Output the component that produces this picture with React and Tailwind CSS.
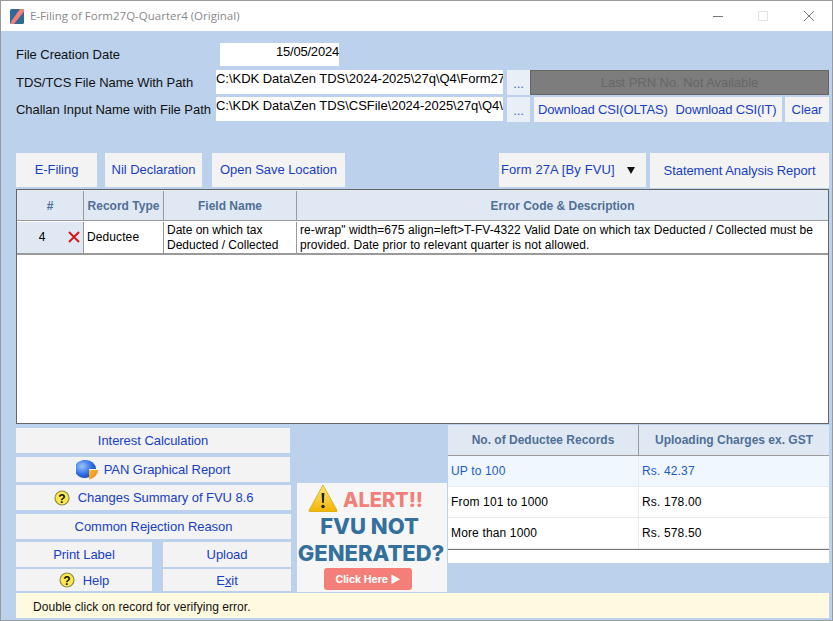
const sans = "font-['Liberation_Sans',Arial,sans-serif]";

function Btn({ className = "", children }) {
  return (
    <div className={"flex items-center justify-center whitespace-nowrap bg-[#f3f3f3] text-[13px] tracking-[-0.05px] text-[#1740c4] " + className}>
      {children}
    </div>
  );
}

function HelpIcon() {
  return (
    <svg width="16" height="16" viewBox="0 0 16 16" className="shrink-0">
      <circle cx="8" cy="8" r="7" fill="#ffe94a" stroke="#8c8a4a" strokeWidth="1.2" />
      <text x="8" y="12.5" textAnchor="middle" fontSize="12" fontWeight="700" fontFamily="Liberation Sans" fill="#111">?</text>
    </svg>
  );
}

function PieIcon() {
  return (
    <svg width="23" height="20" viewBox="0 0 23 20" className="shrink-0">
      <defs>
        <radialGradient id="pieBlue" cx="0.35" cy="0.35" r="0.75">
          <stop offset="0" stopColor="#9cc4ff" />
          <stop offset="0.6" stopColor="#2f6fe6" />
          <stop offset="1" stopColor="#1a3fa8" />
        </radialGradient>
        <linearGradient id="pieOrange" x1="0" y1="0" x2="1" y2="1">
          <stop offset="0" stopColor="#ffc02e" />
          <stop offset="1" stopColor="#ee7d12" />
        </linearGradient>
      </defs>
      <path d="M10 0a10 9 0 1 0 3 17V9h7A10 9 0 0 0 10 0z" fill="url(#pieBlue)" />
      <path d="M13 10h9c0 4-3 8-9 9.500z" fill="url(#pieOrange)" />
    </svg>
  );
}

function Logo() {
  return (
    <svg width="14" height="15" viewBox="0 0 14 15" className="shrink-0">
      <rect width="14" height="15" rx="1.5" fill="#2f6a94" />
      <path d="M10 0h4v2.500L4 15H1v-2.500z" fill="#f57f78" />
    </svg>
  );
}

function WarnIcon() {
  return (
    <svg width="30" height="28" viewBox="0 0 30 28" className="shrink-0">
      <defs>
        <linearGradient id="warn" x1="0" y1="0" x2="0" y2="1">
          <stop offset="0" stopColor="#ffe680" />
          <stop offset="1" stopColor="#f2b500" />
        </linearGradient>
      </defs>
      <path d="M15 1 29 26.500q0.300 1-1 1H2q-1.300 0-1-1z" fill="url(#warn)" stroke="#d9a400" strokeWidth="0.8" />
      <path d="M13.600 9h2.800l-0.600 10h-1.600z" fill="#222" />
      <circle cx="15" cy="22.500" r="1.700" fill="#222" />
    </svg>
  );
}

function Field({ value, className = "" }) {
  return (
    <div className={"h-[24px] overflow-hidden whitespace-nowrap bg-white text-[13px] leading-[17px] tracking-[-0.03px] text-black " + className}>
      {value}
    </div>
  );
}

function ChargeRow({ left, right, active }) {
  const color = active ? "bg-[#f0f7fe] text-[#1c5bcc]" : "bg-white text-black";
  return (
    <div className={"grid h-[31px] grid-cols-[191px_1fr] border-b border-[#eaeaea] text-[12px] tracking-[0.15px] " + color}>
      <div className="flex items-center border-r border-[#eaeaea] pl-[3px]">{left}</div>
      <div className="flex items-center pl-[3px]">{right}</div>
    </div>
  );
}

export default function App() {
  return (
    <div className={"flex h-[621px] w-[833px] flex-col overflow-hidden border border-[#9a9a9a] bg-[#bcd1ec] " + sans}>
      <div className="flex h-[30px] shrink-0 items-center bg-white pl-[9px]">
        <Logo />
        <span className="ml-[6px] font-['Open_Sans',sans-serif] text-[11.5px] text-[#8a8a8a]">E-Filing of Form27Q-Quarter4 (Original)</span>
        <svg width="103" height="14" viewBox="0 0 103 14" className="ml-auto mr-[16px]">
          <path d="M0 7.500h10" stroke="#777" />
          <rect x="45.500" y="2.500" width="9" height="9" fill="none" stroke="#e2e2e2" />
          <path d="M91 2l10 10M101 2 91 12" stroke="#777" />
        </svg>
      </div>

      <div className="flex flex-1 flex-col pl-[15px] pr-[3px]">
        <div className="mt-[12px] flex h-[23px] items-center text-[13px] tracking-[-0.05px] text-[#111]">
          <span className="w-[204px]">File Creation Date</span>
          <div className="h-[23px] w-[119px] bg-white text-right leading-[17px] tracking-[-0.2px] text-black">15/05/2024</div>
        </div>

        <div className="mt-[4px] flex h-[25px] text-[13px] tracking-[-0.05px] text-[#111]">
          <span className="flex w-[200px] items-center">TDS/TCS File Name With Path</span>
          <Field value="C:\KDK Data\Zen TDS\2024-2025\27q\Q4\Form27" className="w-[287px]" />
          <div className="ml-[4px] flex w-[23px] items-end justify-center bg-[#e9eff7] pb-[5px] leading-none text-[#3d6fc0]">...</div>
          <div className="flex flex-1 items-center justify-center border border-[#666] bg-[#7d7d7d] text-[#666]">Last PRN No. Not Available</div>
        </div>

        <div className="mt-[2px] flex h-[25px] text-[13px] tracking-[-0.05px] text-[#111]">
          <span className="flex w-[200px] items-center whitespace-nowrap pt-px">Challan Input Name with File Path</span>
          <Field value="C:\KDK Data\Zen TDS\CSFile\2024-2025\27q\Q4\" className="w-[287px]" />
          <div className="ml-[4px] flex w-[23px] items-end justify-center bg-[#e9eff7] pb-[5px] leading-none text-[#3d6fc0]">...</div>
          <div className="ml-[4px] flex w-[248px] items-center gap-[8px] whitespace-nowrap bg-[#f3f3f3] pl-[4px] pt-px tracking-[-0.15px] text-[#1740c4]">
            <span>Download CSI(OLTAS)</span>
            <span>Download CSI(IT)</span>
          </div>
          <Btn className="ml-[3px] flex-1 pt-px">Clear</Btn>
        </div>

        <div className="mt-[31px] flex h-[36px]">
          <Btn className="h-[34px] w-[81px]">E-Filing</Btn>
          <Btn className="ml-[8px] h-[34px] w-[97px]">Nil Declaration</Btn>
          <Btn className="ml-[10px] h-[34px] w-[133px]">Open Save Location</Btn>
          <div className="ml-[154px] flex h-[34px] w-[147px] items-center bg-[#f3f3f3] pl-[2px] text-[13px] tracking-[0.1px] text-[#1740c4]">
            Form 27A [By FVU]
            <svg width="8" height="7" viewBox="0 0 8 7" className="ml-[12px]"><path d="M0 0h8L4 7z" fill="#111" /></svg>
          </div>
          <Btn className="ml-[4px] h-[35px] flex-1 pt-px">Statement Analysis Report</Btn>
        </div>

        <div className="flex h-[235px] flex-col border border-[#666] bg-white">
          <div className="grid h-[31px] grid-cols-[67px_80px_133px_1fr] border-b border-[#9a9a9a] bg-[#e0e9f3] pt-px text-[12px] font-bold text-[#4f6f96]">
            <div className="flex items-center justify-center border-r border-[#9a9a9a]">#</div>
            <div className="flex items-center justify-center border-r border-[#9a9a9a]">Record Type</div>
            <div className="flex items-center justify-center border-r border-[#9a9a9a]">Field Name</div>
            <div className="flex items-center justify-center">Error Code &amp; Description</div>
          </div>
          <div className="grid h-[34px] grid-cols-[67px_80px_133px_1fr] border-b-2 border-[#9a9a9a] pt-px text-[12px] leading-[15px] text-black">
            <div className="relative flex items-center justify-center border-r border-[#9a9a9a] bg-[#e0e9f3] pr-[16px]">
              4
              <svg width="12" height="12" viewBox="0 0 12 12" className="absolute right-[3px] top-[9px]">
                <path d="M1 1l10 10M11 1 1 11" stroke="#d81818" strokeWidth="2" />
              </svg>
            </div>
            <div className="flex items-center border-r border-[#9a9a9a] pl-[3px] tracking-[0.1px]">Deductee</div>
            <div className="flex items-center border-r border-[#9a9a9a] pl-[3px]">Date on which tax Deducted / Collected</div>
            <div className="flex items-center pl-[3px] tracking-[0.07px]">re-wrap" width=675 align=left&gt;T-FV-4322 Valid Date on which tax Deducted / Collected must be provided. Date prior to relevant quarter is not allowed.</div>
          </div>
        </div>

        <div className="mt-px flex h-[168px]">
          <div className="flex w-[275px] flex-col pt-[3px]">
            <Btn className="h-[25px] w-[274px]">Interest Calculation</Btn>
            <Btn className="mt-[4px] h-[25px] w-[274px] gap-[5px]"><PieIcon /><span className="pt-px">PAN Graphical Report</span></Btn>
            <Btn className="mt-[3px] h-[25px] gap-[8px]"><HelpIcon />Changes Summary of FVU 8.6</Btn>
            <Btn className="mt-[4px] h-[25px] pt-px">Common Rejection Reason</Btn>
            <div className="mt-[3px] grid h-[25px] grid-cols-[136px_128px] gap-x-[11px]">
              <Btn className="pt-px">Print Label</Btn>
              <Btn className="pt-px">Upload</Btn>
            </div>
            <div className="mt-[2px] grid h-[22px] grid-cols-[136px_128px] gap-x-[11px]">
              <Btn className="gap-[8px]"><HelpIcon /><span className="pt-px">Help</span></Btn>
              <Btn className="pt-px">E<span className="underline">x</span>it</Btn>
            </div>
          </div>

          <div className="ml-[6px] mt-[58px] flex h-[109px] w-[150px] flex-col items-center bg-[#f6f6f6] pt-px font-['Inter',sans-serif] font-extrabold">
            <div className="flex h-[28px] items-center gap-[5px] pr-[13px]">
              <WarnIcon />
              <span className="mt-[3px] text-[20px] leading-none text-[#f47f78]">ALERT!!</span>
            </div>
            <div className="mr-[5px] mt-[2px] text-[22px] leading-[25px] text-[#33709c]">FVU NOT</div>
            <div className="mr-[2px] mt-px text-[22px] leading-[26px] text-[#33709c]">GENERATED?</div>
            <div className="mr-[8px] mt-[2px] flex h-[22px] w-[88px] items-center justify-center rounded-[3px] bg-[#f47f78] pt-px text-[10.5px] font-bold text-white">Click Here ►</div>
          </div>

          <div className="ml-px flex-1">
            <div className="h-[138px] bg-white">
              <div className="grid h-[31px] grid-cols-[191px_1fr] border-b border-[#9a9a9a] bg-[#e0e9f3] text-[12px] font-bold text-[#4f6f96]">
                <div className="flex items-center justify-center border-r border-[#9a9a9a]">No. of Deductee Records</div>
                <div className="flex items-center justify-center">Uploading Charges ex. GST</div>
              </div>
              <ChargeRow left="UP to 100" right="Rs. 42.37" active />
              <ChargeRow left="From 101 to 1000" right="Rs. 178.00" />
              <ChargeRow left="More than 1000" right="Rs. 578.50" />
              <div className="border-t border-[#777]" />
            </div>
          </div>
        </div>

        <div className="flex h-[25px] items-center bg-[#fff9df] pl-[17px] pt-[3px] text-[12px] tracking-[0.05px] text-[#111]">Double click on record for verifying error.</div>
      </div>
    </div>
  );
}
